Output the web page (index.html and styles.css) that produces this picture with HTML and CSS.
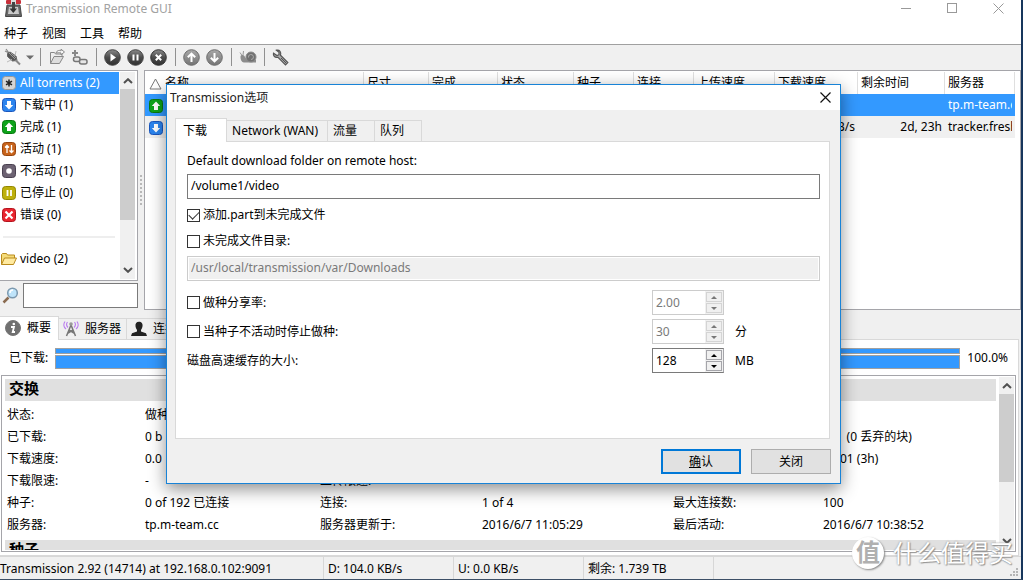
FILE: index.html
```html
<!DOCTYPE html>
<html lang="zh-CN">
<head>
<meta charset="utf-8">
<title>Transmission Remote GUI</title>
<link rel="stylesheet" href="styles.css">
</head>
<body>
<svg class="defs" aria-hidden="true">
  <defs>
    <linearGradient id="g-dark" x1="0" y1="0" x2="0" y2="1"><stop offset="0" stop-color="#8a8a8a"/><stop offset=".5" stop-color="#4c4c4c"/><stop offset="1" stop-color="#303030"/></linearGradient>
    <linearGradient id="g-gray" x1="0" y1="0" x2="0" y2="1"><stop offset="0" stop-color="#a8a8a8"/><stop offset="1" stop-color="#747474"/></linearGradient>
    <symbol id="sq-up" viewBox="0 0 14 14"><rect x=".5" y=".5" width="13" height="13" rx="3" fill="#0da31a" stroke="#08780f"/><path d="M7 2.500 11.200 7H9v4H5V7H2.800z" fill="#fff"/></symbol>
    <symbol id="sq-down" viewBox="0 0 14 14"><rect x=".5" y=".5" width="13" height="13" rx="3" fill="#2b84ee" stroke="#1a56bd"/><path d="M7 11.500 2.800 7H5V3h4v4h2.200z" fill="#fff"/></symbol>
    <symbol id="chev-up" viewBox="0 0 10 6"><path d="M1 5 5 1.200 9 5" fill="none" stroke="#505050" stroke-width="2"/></symbol>
    <symbol id="chev-down" viewBox="0 0 10 6"><path d="M1 1 5 4.800 9 1" fill="none" stroke="#505050" stroke-width="2"/></symbol>
  </defs>
</svg>

<div class="window">
  <header class="titlebar">
    <svg class="app-icon" width="17" height="18" viewBox="0 0 17 18"><path d="M2 5h13l1.500 11.500H.5z" fill="#686868" stroke="#444"/><path d="M4 7h9l1 7H3z" fill="#c9c9c9"/><rect x="1" y="0" width="15" height="4" rx="1" fill="#c8303a"/><rect x="6" y="0" width="5" height="4" fill="#ddd"/><rect x="7" y="2" width="3" height="8" fill="#444"/><path d="M4.500 8.500H12L8.300 13z" fill="#333"/></svg>
    <h1 class="title">Transmission Remote GUI</h1>
    <div class="win-controls">
      <button aria-label="最小化"><svg width="11" height="11" viewBox="0 0 11 11"><path d="M0 5.500h10" stroke="#999"/></svg></button>
      <button aria-label="最大化"><svg width="11" height="11" viewBox="0 0 11 11"><rect x=".5" y=".5" width="9" height="9" fill="none" stroke="#999"/></svg></button>
      <button aria-label="关闭窗口"><svg width="11" height="11" viewBox="0 0 11 11"><path d="M.5.5l10 10M10.500.5l-10 10" stroke="#999"/></svg></button>
    </div>
  </header>

  <nav class="menubar">
    <button>种子</button><button>视图</button><button>工具</button><button>帮助</button>
  </nav>

  <div class="toolbar">
    <button aria-label="连接"><svg width="18" height="18" viewBox="0 0 18 18"><path d="M2 1l3 4M1 3l4 2" stroke="#888" stroke-width="1.200"/><path d="M3.500 5.500 6 4l6 4 1 4.500-4.500.5-5-4.500z" fill="#555" stroke="#666"/><path d="M5 5l6 6M7 5l5 5" stroke="#999"/><path d="M11.500 12l4.500 4.500" stroke="#888" stroke-width="2"/><path d="M3 14l5-2.500M12 3l-1 5" stroke="#bbb"/></svg></button>
    <button class="narrow" aria-label="连接列表"><svg width="8" height="5" viewBox="0 0 8 5"><path d="M0 .5h8L4 4.500z" fill="#6c6c6c"/></svg></button>
    <span class="tool-sep"></span>
    <button aria-label="添加种子"><svg width="16" height="16" viewBox="0 0 16 16"><path d="M1.500 14.500v-11h4l1 1.500h6.500V7" fill="#eee" stroke="#888"/><path d="M1.500 14.500 5 7.500h9.500l-4 7z" fill="#ddd" stroke="#888"/><path d="M7 4c1-3 4-3 5-2V.2L15.500 3 12 5.800V4c-2-.7-3.500 0-5 0z" fill="#f5f5f5" stroke="#888"/></svg></button>
    <button aria-label="添加链接"><svg width="17" height="16" viewBox="0 0 17 16"><path d="M4 1v6M1 4h6" stroke="#888" stroke-width="2"/><g fill="#e6e6e6" stroke="#777" stroke-width="1.500"><rect x="2.500" y="8" width="6.500" height="4.500" rx="2"/><rect x="8.500" y="10.500" width="7.500" height="4.500" rx="2"/></g></svg></button>
    <span class="tool-sep"></span>
    <button aria-label="开始"><svg width="17" height="17" viewBox="0 0 17 17"><circle cx="8.500" cy="8.500" r="7.800" fill="url(#g-dark)" stroke="#444"/><path d="M6.500 4.500 12 8.500l-5.500 4z" fill="#fff"/></svg></button>
    <button aria-label="暂停"><svg width="17" height="17" viewBox="0 0 17 17"><circle cx="8.500" cy="8.500" r="7.800" fill="url(#g-dark)" stroke="#444"/><path d="M6.500 5.500v6M10.500 5.500v6" stroke="#fff" stroke-width="2"/></svg></button>
    <button aria-label="移除"><svg width="17" height="17" viewBox="0 0 17 17"><circle cx="8.500" cy="8.500" r="7.800" fill="url(#g-dark)" stroke="#333"/><path d="M5.800 5.800l5.400 5.400M11.200 5.800l-5.400 5.400" stroke="#fff" stroke-width="2"/></svg></button>
    <span class="tool-sep"></span>
    <button aria-label="上移"><svg width="17" height="17" viewBox="0 0 17 17"><circle cx="8.500" cy="8.500" r="7.800" fill="url(#g-gray)" stroke="#6d6d6d"/><path d="M8.500 13V5M4.800 8.300l3.700-3.700 3.700 3.700" fill="none" stroke="#fff" stroke-width="2"/></svg></button>
    <button aria-label="下移"><svg width="17" height="17" viewBox="0 0 17 17"><circle cx="8.500" cy="8.500" r="7.800" fill="url(#g-gray)" stroke="#6d6d6d"/><path d="M8.500 4v8M4.800 8.700l3.700 3.700 3.700-3.700" fill="none" stroke="#fff" stroke-width="2"/></svg></button>
    <span class="tool-sep"></span>
    <button aria-label="限速模式"><svg width="18" height="14" viewBox="0 0 18 14"><path d="M1 2.500l2 3M4.500 1l-.5 4" stroke="#999"/><path d="M1.500 6.500C2 4.500 5 4.500 6 7l2 3h9v2.500H5C2 12 1.500 9 1.500 6.500z" fill="#8c8c8c"/><circle cx="12" cy="7" r="5" fill="#707070" stroke="#8a8a8a"/><path d="M9.500 7.500a2.500 2.500 0 1 1 2.500 2" fill="none" stroke="#aaa"/></svg></button>
    <span class="tool-sep"></span>
    <button aria-label="选项"><svg width="17" height="17" viewBox="0 0 17 17"><path d="M4.500 1.200l2.500 2v2.500L5 6.500 1.500 4.200C.8 7 3 9 6 8.300l7.500 7.500 2.300-2.300L8.500 6.300C9.500 3 7.500.5 4.500 1.200z" fill="#aaa" stroke="#555" stroke-width="1.200"/><path d="M9 9l5 5" stroke="#555"/></svg></button>
  </div>

  <main class="content">
    <aside class="sidebar">
      <div class="filters">
        <ul class="filter-list">
          <li class="selected"><svg width="14" height="14" viewBox="0 0 14 14"><rect x=".5" y=".5" width="13" height="13" rx="3" fill="#d5d5d5" stroke="#999"/><path d="M7 3.500v7M4 5.200l6 3.600M4 8.800l6-3.600" stroke="#222" stroke-width="1.500"/></svg>All torrents (2)</li>
          <li><svg width="14" height="14"><use href="#sq-down"/></svg>下载中 (1)</li>
          <li><svg width="14" height="14"><use href="#sq-up"/></svg>完成 (1)</li>
          <li><svg width="14" height="14" viewBox="0 0 14 14"><rect x=".5" y=".5" width="13" height="13" rx="3" fill="#c8641c" stroke="#98440c"/><path d="M5 11V3.500M3 5.500l2-2 2 2M9.500 3v7M7.500 8.500l2 2 2-2" fill="none" stroke="#fff" stroke-width="1.300"/></svg>活动 (1)</li>
          <li><svg width="14" height="14" viewBox="0 0 14 14"><rect x=".5" y=".5" width="13" height="13" rx="3" fill="#6c6272" stroke="#494050"/><circle cx="7" cy="7" r="2.800" fill="#fff"/></svg>不活动 (1)</li>
          <li><svg width="14" height="14" viewBox="0 0 14 14"><rect x=".5" y=".5" width="13" height="13" rx="3" fill="#beb00c" stroke="#938700"/><path d="M5.500 4v6M9 4v6" stroke="#fff" stroke-width="1.800"/></svg>已停止 (0)</li>
          <li><svg width="14" height="14" viewBox="0 0 14 14"><rect x=".5" y=".5" width="13" height="13" rx="3" fill="#e9252f" stroke="#b3131c"/><path d="M3.500 3.500l7 7M10.500 3.500l-7 7" stroke="#fff" stroke-width="2.200"/></svg>错误 (0)</li>
          <li class="divider"></li>
          <li class="folder"><svg width="16" height="14" viewBox="0 0 16 14"><path d="M.5 12.500v-10l1-1h4l1 1.500h7v3" fill="#f5dc7a" stroke="#b98a1c"/><path d="M.5 12.500 3.500 6h12l-3 6.500z" fill="#ffeaa0" stroke="#b98a1c"/></svg>video (2)</li>
        </ul>
        <div class="scrollbar">
          <svg width="10" height="6"><use href="#chev-up"/></svg>
          <div class="track"><div class="thumb filter-thumb"></div></div>
          <svg width="10" height="6"><use href="#chev-down"/></svg>
        </div>
      </div>
      <div class="search">
        <svg width="17" height="17" viewBox="0 0 17 17"><path d="M1.500 15.500l5-5" stroke="#8a6b50" stroke-width="2.500"/><circle cx="10.500" cy="6" r="4.800" fill="#bfe4fa" stroke="#7b98ae" stroke-width="1.500"/><path d="M8 6c0-2 1-3 3-3" fill="none" stroke="#fff" stroke-width="1.500"/></svg>
        <input type="text" aria-label="搜索">
      </div>
    </aside>
    <div class="splitter"><span></span></div>
    <section class="torrents">
      <table>
        <colgroup><col><col class="w65"><col class="w69"><col class="w76"><col class="w60"><col class="w60"><col class="w81"><col class="w83"><col class="w87"><col class="w70"></colgroup>
        <thead>
          <tr><th class="name"><svg width="13" height="12" viewBox="0 0 13 12"><path d="M6.500 1 12 11H1z" fill="#fff" stroke="#777"/></svg>名称</th><th>尺寸</th><th>完成</th><th>状态</th><th>种子</th><th>连接</th><th>上传速度</th><th>下载速度</th><th>剩余时间</th><th>服务器</th></tr>
        </thead>
        <tbody>
          <tr class="selected"><td class="name"><svg width="14" height="14"><use href="#sq-up"/></svg></td><td></td><td></td><td></td><td></td><td></td><td></td><td></td><td></td><td>tp.m-team.cc</td></tr>
          <tr class="alt"><td class="name"><svg width="14" height="14"><use href="#sq-down"/></svg></td><td></td><td></td><td></td><td></td><td></td><td></td><td class="num">104.0 KB/s</td><td class="num">2d, 23h</td><td>tracker.freshon.tv</td></tr>
        </tbody>
      </table>
    </section>
  </main>

  <section class="details">
    <div class="tabs detail-tabs">
      <button class="active"><svg width="16" height="16" viewBox="0 0 16 16"><circle cx="8" cy="8" r="7.500" fill="#707070" stroke="#777"/><circle cx="8.800" cy="4" r="1.300" fill="#fff"/><path d="M6 7h3l-1.300 5H10" fill="none" stroke="#fff" stroke-width="1.800"/></svg>概要</button>
      <button><svg width="16" height="16" viewBox="0 0 16 16"><path d="M3.500 15 8 4l4.500 11M6 9l5 3M10 9l-5 3" fill="none" stroke="#777" stroke-width="1.500"/><circle cx="8" cy="3" r="1.800" fill="#999"/><path d="M4.500 1c-1.500 2-1 4 .5 5.500M2 .5c-2 3-1 6 1 7.500M11.500 1c1.500 2 1 4-.5 5.500M14 .5c2 3 1 6-1 7.500" fill="none" stroke="#bb80ef" stroke-width="1.200"/></svg>服务器</button>
      <button><svg width="16" height="16" viewBox="0 0 16 16"><path d="M8 .8c2.500 0 4 2 3.500 4.500-.3 2-1 3-1.500 3.700v1.500l5 1.800 1 2.700H0l1-2.700 5-1.800V9C5.500 8.300 4.800 7.300 4.500 5.300 4 2.800 5.500.8 8 .8z" fill="#222"/></svg>连接</button>
    </div>
    <div class="detail-page">
      <div class="progress">
        <span>已下载:</span>
        <div class="bars"><div class="bar thin"></div><div class="bar thick"></div></div>
        <span>100.0%</span>
      </div>
      <div class="info">
        <div class="info-body">
          <h2>交换</h2>
          <dl>
            <dt>状态:</dt><dd>做种</dd><dt></dt><dd></dd><dt></dt><dd></dd>
            <dt>已下载:</dt><dd>0 b</dd><dt></dt><dd></dd><dt></dt><dd>0 b&nbsp; (0 丢弃的块)</dd>
            <dt>下载速度:</dt><dd>0.0</dd><dt></dt><dd></dd><dt></dt><dd>11:01 (3h)</dd>
            <dt>下载限速:</dt><dd>-</dd><dt>上传限速:</dt><dd></dd><dt></dt><dd></dd>
            <dt>种子:</dt><dd>0 of 192 已连接</dd><dt>连接:</dt><dd>1 of 4</dd><dt>最大连接数:</dt><dd>100</dd>
            <dt>服务器:</dt><dd>tp.m-team.cc</dd><dt>服务器更新于:</dt><dd>2016/6/7 11:05:29</dd><dt>最后活动:</dt><dd>2016/6/7 10:38:52</dd>
          </dl>
          <h2>种子</h2>
        </div>
        <div class="scrollbar">
          <svg width="10" height="6"><use href="#chev-up"/></svg>
          <div class="track"><div class="thumb info-thumb"></div></div>
          <svg width="10" height="6"><use href="#chev-down"/></svg>
        </div>
      </div>
    </div>
  </section>

  <footer class="statusbar">
    <span class="host">Transmission 2.92 (14714) at 192.168.0.102:9091</span>
    <span class="cell">D: 104.0 KB/s</span>
    <span class="cell">U: 0.0 KB/s</span>
    <span class="cell">剩余: 1.739 TB</span>
    <span class="rest"></span>
    <svg width="9" height="9" viewBox="0 0 9 9"><path d="M6 0h2v2H6zM3 3h2v2H3zM6 3h2v2H6zM0 6h2v2H0zM3 6h2v2H3zM6 6h2v2H6z" fill="#b5b5b5"/></svg>
  </footer>
</div>

<div class="dialog" role="dialog" aria-labelledby="dlg-title">
  <header class="dlg-title">
    <h2 id="dlg-title">Transmission选项</h2>
    <button aria-label="关闭对话框"><svg width="11" height="11" viewBox="0 0 11 11"><path d="M.5.5l10 10M10.500.5l-10 10" stroke="#111" stroke-width="1.200"/></svg></button>
  </header>
  <div class="dlg-body">
    <div class="tabs dlg-tabs">
      <button class="active">下载</button><button class="wide">Network (WAN)</button><button>流量</button><button>队列</button>
    </div>
    <form class="dlg-page">
      <label for="folder">Default download folder on remote host:</label>
      <input class="text" id="folder" type="text" value="/volume1/video">
      <label class="check"><input type="checkbox" checked>添加.part到未完成文件</label>
      <label class="check"><input type="checkbox">未完成文件目录:</label>
      <input class="text" type="text" aria-label="未完成文件目录" value="/usr/local/transmission/var/Downloads" disabled>
      <div class="limits">
        <label class="check"><input type="checkbox">做种分享率:</label>
        <div class="spin off"><input type="number" step="0.01" value="2.00" aria-label="做种分享率" disabled><div class="steps"><button type="button" aria-label="增加" disabled></button><button type="button" class="dn" aria-label="减少" disabled></button></div></div>
        <span></span>
        <label class="check"><input type="checkbox">当种子不活动时停止做种:</label>
        <div class="spin off"><input type="number" value="30" aria-label="不活动分钟数" disabled><div class="steps"><button type="button" aria-label="增加" disabled></button><button type="button" class="dn" aria-label="减少" disabled></button></div></div>
        <span>分</span>
        <label for="cache">磁盘高速缓存的大小:</label>
        <div class="spin"><input id="cache" type="number" value="128"><div class="steps"><button type="button" aria-label="增加"></button><button type="button" class="dn" aria-label="减少"></button></div></div>
        <span>MB</span>
      </div>
    </form>
    <div class="dlg-actions">
      <button class="default"><u>确</u>认</button>
      <button>关闭</button>
    </div>
  </div>
</div>

<div class="watermark"><span class="mark">值</span><span>什么值得买</span></div>
</body>
</html>
```
FILE: styles.css
```css
* { box-sizing: border-box; }
body, button, input {
  font: 12px/22px "Noto Sans", "Noto Sans CJK SC", sans-serif;
  color: #000;
}
body { margin: 0; height: 100vh; overflow: hidden; position: relative; }
h1, h2, ul, dl, dd { margin: 0; padding: 0; font-weight: normal; }
ul { list-style: none; }
button { background: none; border: 0; padding: 0; }
svg { flex: none; display: block; }
.defs { position: absolute; width: 0; height: 0; }

.window {
  height: 100%;
  display: flex;
  flex-direction: column;
  background: #f0f0f0;
  border-right: 2px solid #17365c;
  border-bottom: 1px solid #3c4f66;
}

.titlebar { display: flex; height: 22px; background: #fff; padding-left: 5px; }
.title { flex: 1; margin-left: 4px; font-size: 12px; line-height: 17px; color: #a2a2a2; }
.win-controls { display: flex; padding-right: 17px; gap: 35px; height: 16px; align-items: center; }
.menubar { display: flex; gap: 14px; height: 22px; background: #fff; padding-left: 4px; }
.menubar button { line-height: 24px; }
.toolbar { display: flex; align-items: center; height: 26px; padding: 0 0 1px 1px; border-top: 1px solid #a0a0a0; }
.toolbar button { width: 23px; display: flex; justify-content: center; }
.toolbar .narrow { width: 11px; }
.tool-sep { width: 1px; height: 18px; margin: 0 4px 0 5px; background: #909090; }

.content { display: flex; height: 240px; flex: none; }
.sidebar { width: 138px; display: flex; flex-direction: column; }
.filters {
  flex: 1; display: flex; background: #fff;
  border: 1px solid #a5a5aa; border-left: 0; padding: 1px;
  padding-left: 0;
}
.filter-list { flex: 1; }
.filter-list li { display: flex; align-items: center; gap: 4px; height: 22px; padding-left: 2px; white-space: nowrap; }
.filter-list .folder { padding-left: 1px; gap: 3px; }
.filter-list .selected { background: #3399ff; color: #fff; }
.filter-list .divider::before { content: ""; flex: 1; height: 2px; margin: 0 4px 0 1px; background: #eee; }
.scrollbar { width: 15px; margin: 0 1px; background: #f0f0f0; display: flex; flex-direction: column; align-items: center; padding: 6px 0; }
.track { flex: 1; align-self: stretch; margin: 5px 0; }
.thumb { background: #cdcdcd; }
.filter-thumb { height: 76%; }
.info-thumb { height: 63%; }
.search { display: flex; align-items: center; height: 29px; gap: 4px; padding-left: 2px; }
.search input { flex: 1; min-width: 0; height: 25px; border: 1px solid #7a7a7a; padding: 0 4px; }
.splitter { width: 6px; display: flex; align-items: center; justify-content: center; }
.splitter span { width: 2px; height: 30px; background: repeating-linear-gradient(#b8b8b8 0 2px, #f0f0f0 2px 4px); }

.torrents { flex: 1; min-width: 0; background: #fff; border: 1px solid #a5a5aa; padding: 1px 5px 0 0; }
.torrents table { width: 100%; table-layout: fixed; border-collapse: separate; border-spacing: 0; }
.torrents th, .torrents td { height: 22px; line-height: 20px; padding: 0 3px; font-weight: normal; text-align: left; overflow: hidden; white-space: nowrap; }
.torrents th { border-right: 1px solid #dfdfdf; line-height: 22px; }
.torrents td { padding-right: 0; border-right: 3px solid transparent; }
.torrents .name { padding-left: 4px; }
.torrents .name svg { display: inline-block; vertical-align: middle; margin-right: 3px; }
.torrents .selected { background: #3399ff; color: #fff; }
.torrents .alt { background: #f0f0f0; }
.torrents .num { text-align: right; }
.w60 { width: 60px; } .w65 { width: 65px; } .w69 { width: 69px; } .w70 { width: 70px; } .w76 { width: 76px; }
.w81 { width: 81px; } .w83 { width: 83px; } .w87 { width: 87px; }

.tabs { display: flex; align-items: flex-end; }
.tabs button { display: flex; align-items: center; height: 22px; border: 1px solid #d9d9d9; border-left: 0; white-space: nowrap; }
.tabs .active { background: #fff; height: 24px; border-bottom: 0; }
.tabs::after { content: ""; flex: 1; border-bottom: 1px solid #d9d9d9; }

.details { flex: 1; min-height: 0; display: flex; flex-direction: column; padding-top: 6px; }
.detail-tabs { margin-right: 2px; }
.detail-tabs button { gap: 6px; padding: 0 5px 0 4px; }
.detail-tabs .active { gap: 6px; padding: 0 7px 2px 5px; }
.detail-page { flex: 1; min-height: 0; display: flex; flex-direction: column; margin-right: 2px; padding: 5px 2px 3px 1px; background: #fff; border: 1px solid #d9d9d9; border-left: 0; border-top: 0; }
.progress { display: flex; align-items: center; gap: 7px; height: 26px; padding: 0 8px 0 8px; }
.bars { flex: 1; display: grid; gap: 1px; }
.bar { background: #3399ff; border: 1px solid #a0a0a0; }
.bar.thin { height: 6px; }
.bar.thick { height: 14px; }
.info { flex: 1; min-height: 0; display: flex; margin-top: 4px; border: 1px solid #a5a5aa; padding: 1px 0; }
.info-body { flex: 1; overflow: hidden; padding: 2px 2px 0 3px; }
.info h2 { height: 22px; background: #e0e0e0; padding-left: 4px; font-size: 15px; line-height: 19px; font-weight: bold; }
.info dl { display: grid; grid-template-columns: 138fr 175fr 162fr 191fr 150fr 173fr; padding: 3px 0 4px 2px; white-space: nowrap; }
.info dt, .info dd { height: 22px; }

.statusbar { display: flex; align-items: stretch; height: 23px; border-top: 1px solid #d7d7d7; white-space: nowrap; line-height: 24px; }
.host { width: 323px; }
.cell { width: 130px; border-left: 1px solid #d7d7d7; padding-left: 4px; }
.rest { flex: 1; border-left: 1px solid #d7d7d7; }
.statusbar svg { align-self: flex-end; margin: 0 2px 2px; }

.dialog {
  position: absolute; left: 166px; top: 84px; width: 675px;
  background: #f0f0f0; border: 1px solid #1883d7;
  box-shadow: 0 5px 16px rgba(0, 0, 0, .45);
}
.dlg-title { display: flex; align-items: center; justify-content: space-between; height: 25px; background: #fff; padding: 0 9px 0 3px; }
.dlg-title h2 { font-size: 12px; color: #222; }
.dlg-body { padding: 8px 9px 9px 8px; }
.dlg-tabs { margin-right: 1px; border-left: 1px solid #d9d9d9; }
.dlg-tabs button { padding: 0 17px 0 5px; }
.dlg-tabs .wide { padding: 0 9px 0 5px; }
.dlg-tabs .active { padding: 0 19px 0 7px; }
.dlg-page { display: flex; flex-direction: column; height: 297px; margin-right: 1px; background: #fff; border: 1px solid #d9d9d9; border-top: 0; padding: 8px 9px 0 11px; }
.text { height: 25px; border: 1px solid #7a7a7a; padding: 0 3px 2px; margin: 2px 0 3px; width: 100%; background: #fff; }
.text:disabled { background: #f0f0f0; border-color: #ccc; box-shadow: inset 0 0 0 1px #fff; color: #7a7a7a; margin: 2px 0 9px; }
.check { display: flex; align-items: center; height: 26px; gap: 3px; }
.check input {
  appearance: none; width: 13px; height: 13px; margin: 0; border: 1px solid #333; background: #fff;
  display: grid; place-items: center;
}
.check input:checked::before { content: ""; width: 9px; height: 5px; margin-bottom: 3px; border: solid #333; border-width: 0 0 1px 1px; transform: rotate(-45deg); }
.limits { display: grid; grid-template-columns: 1fr 72px 85px; row-gap: 4px; column-gap: 11px; align-items: center; }
.limits .check { height: 22px; }
.spin { display: flex; height: 25px; border: 1px solid #7a7a7a; border-right-color: #a5a5aa; background: #fff; }
.spin input { flex: 1; min-width: 0; border: 0; padding: 0 3px; background: #fff; appearance: textfield; }
.spin input::-webkit-inner-spin-button { appearance: none; margin: 0; }
.steps { width: 18px; display: grid; gap: 1px; padding: 1px; background: #f0f0f0; }
.steps button { display: grid; place-items: center; border: 1px solid #a5a5aa; background: #f0f0f0; }
.steps button::before { content: ""; border: 3px solid transparent; border-top: 0; border-bottom-color: #000; }
.steps .dn::before { border: 3px solid transparent; border-bottom: 0; border-top-color: #000; }
.off { border-color: #ccc; }
.off input { color: #7a7a7a; }
.off .steps button { border-color: #d4d4d4; }
.off .steps button::before { border-bottom-color: #777; }
.off .steps .dn::before { border-bottom-color: transparent; border-top-color: #777; }
.dlg-actions { display: flex; justify-content: flex-end; gap: 10px; padding-top: 10px; }
.dlg-actions button { width: 80px; height: 25px; background: #e1e1e1; border: 1px solid #adadad; }
.dlg-actions .default { border: 2px solid #0078d7; }

.watermark {
  position: absolute; right: 10px; bottom: 10px;
  display: flex; align-items: center; gap: 9px;
  font-size: 24px; line-height: 34px; color: #fff;
  text-shadow: 0 0 2px #888, 1px 1px 1px #999;
}
.mark { width: 32px; height: 32px; border-radius: 50%; background: #fff; box-shadow: 1px 1px 2px #888; color: #b0b0b0; text-shadow: none; font-weight: bold; line-height: 30px; text-align: center; }
```
